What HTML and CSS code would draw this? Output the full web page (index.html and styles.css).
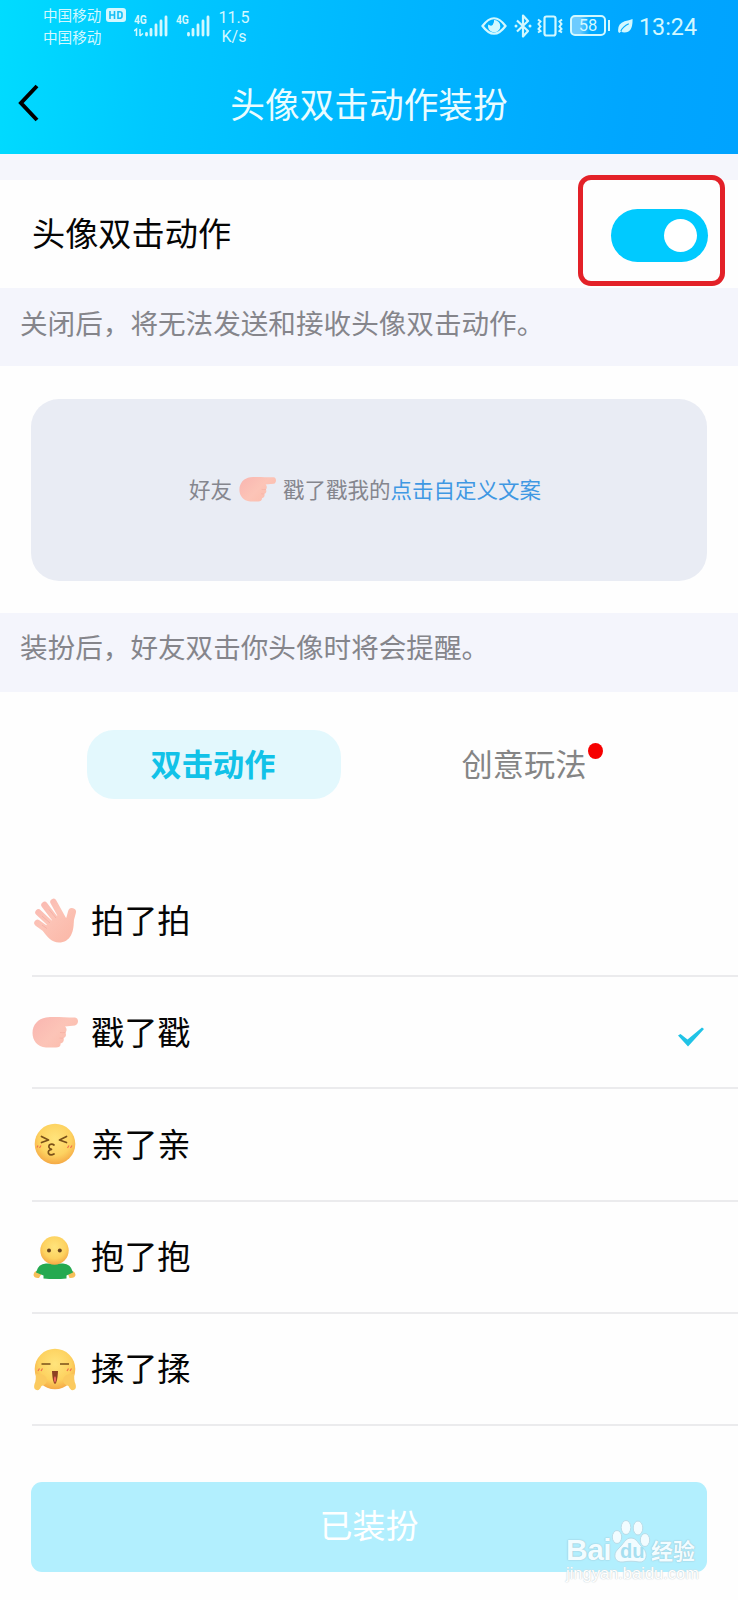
FILE: index.html
```html
<!DOCTYPE html>
<html lang="zh-CN">
<head>
<meta charset="utf-8">
<title>头像双击动作装扮</title>
<link rel="stylesheet" href="styles.css">
</head>
<body>
<svg class="defs" width="0" height="0">
  <defs>
    <radialGradient id="face" cx="50%" cy="38%" r="62%">
      <stop offset="0" stop-color="#ffe47c"/><stop offset=".65" stop-color="#fdd260"/><stop offset="1" stop-color="#f5a945"/>
    </radialGradient>
    <linearGradient id="skin" gradientUnits="userSpaceOnUse" x1="0" y1="0" x2="40" y2="40">
      <stop offset="0" stop-color="#f9b5b0"/><stop offset=".5" stop-color="#fcc4b7"/><stop offset="1" stop-color="#fbb9a9"/>
    </linearGradient>
    <symbol id="point" viewBox="0 0 46 32">
      <path d="M14 1.500C22 .5 31 1.500 43 1.500C47 2 47 8.500 43 9.500L33 10.500C35 12 35 15 33.500 16.500C34.500 19 34 21 31.500 22C32.500 25 31 27 28.500 27.500C29 30 27 31.500 24 31.500H14C5 31 .5 24 .5 17C.5 9 6 2.500 14 1.500Z" fill="url(#skin)"/>
      <path d="M28 16.500Q31 17 33.500 16.500M27.500 22Q30 22.500 31.500 22" fill="none" stroke="#f5ada1" stroke-width=".7"/>
    </symbol>
  </defs>
</svg>
<header class="header">
  <div class="status">
    <div class="carriers">
      <div class="carrier">中国移动<svg class="hd" width="20" height="14" viewBox="0 0 20 14"><rect width="20" height="14" rx="3" fill="#d2f8ff"/><path d="M4 3v8M8.500 3v8M4 7h4.500M12 3.700v6.600h1.500q2.500 0 2.500-2v-2.600q0-2-2.500-2z" fill="none" stroke="#14bdf5" stroke-width="1.600"/></svg></div>
      <div class="carrier">中国移动</div>
    </div>
    <div class="signal">
      <span class="net">4G</span>
      <svg width="34" height="22" viewBox="0 0 34 22"><path d="M0 16l2.500-2v7M6 14v7M6 21l3-2.500" fill="none" stroke="#d2f8ff" stroke-width="1.500"/><path d="M12.500 20v-1.500M17 20v-5.500M22 20v-10M27 20v-14M32 20v-18" stroke="#d2f8ff" stroke-width="2.800" stroke-linecap="round"/></svg>
    </div>
    <div class="signal">
      <span class="net">4G</span>
      <svg width="34" height="22" viewBox="0 0 34 22"><path d="M12.500 20v-1.500M17 20v-5.500M22 20v-10M27 20v-14M32 20v-18" stroke="#d2f8ff" stroke-width="2.800" stroke-linecap="round"/></svg>
    </div>
    <div class="speed"><span>11.5</span><span>K/s</span></div>
    <div class="system">
      <svg width="26" height="20" viewBox="0 0 26 20"><path d="M1.500 10Q13-5.500 24.500 10Q13 25.500 1.500 10Z" fill="none" stroke="#d2f8ff" stroke-width="2.200"/><path d="M13 4a6.200 6.200 0 1 1-5.800 4.500q2.800 2.200 4.600.2Q13.500 6.500 13 4Z" fill="#d2f8ff"/></svg>
      <svg class="bluetooth" width="18" height="24" viewBox="0 0 18 24"><path d="M3 6.500L14 17L9 22.500V1.500L14 7L3 17.500" fill="none" stroke="#d2f8ff" stroke-width="2.200" stroke-linejoin="round"/><circle cx="2" cy="12" r="1.500" fill="#d2f8ff"/><circle cx="16" cy="12" r="1.500" fill="#d2f8ff"/></svg>
      <svg class="vibrate" width="26" height="22" viewBox="0 0 26 22"><rect x="7.500" y="1.500" width="11" height="19" rx="2" fill="none" stroke="#d2f8ff" stroke-width="2.200"/><path d="M1 4.500l2.500 2-2 2.500 2 2.500-2 2.500 2 2-2.500 1.500M25 4.500l-2.500 2 2 2.500-2 2.500 2 2.500-2 2 2.500 1.500" fill="none" stroke="#d2f8ff" stroke-width="2"/></svg>
      <div class="battery"><span>58</span></div>
      <svg class="leaf" width="15" height="16" viewBox="0 0 16 16"><path d="M15.500.5Q16 15 7 15Q4.500 15 3.500 13.500L1.500 15.500L.3 14.500Q-1 6 7 3Q12 2 15.500.5Z" fill="#d2f8ff"/><path d="M3 13.500Q5 8.500 11.500 5.500" fill="none" stroke="#06aefe" stroke-width="1.200"/></svg>
      <span class="clock">13:24</span>
    </div>
  </div>
  <div class="navbar">
    <svg class="back" width="22" height="38" viewBox="0 0 22 38"><path d="M19 2L3 19L19 36" fill="none" stroke="#000" stroke-width="4"/></svg>
    <h1 class="title">头像双击动作装扮</h1>
  </div>
</header>
<main class="page">
  <section class="setting">
    <span>头像双击动作</span>
    <div class="highlight"><div class="switch"><i class="knob"></i></div></div>
  </section>
  <p class="note">关闭后，将无法发送和接收头像双击动作。</p>
  <section class="preview">
    <div class="card">
      <span>好友</span>
      <svg class="mini" width="37" height="26"><use href="#point"/></svg>
      <span>戳了戳我的<a class="link">点击自定义文案</a></span>
    </div>
  </section>
  <p class="note note-second">装扮后，好友双击你头像时将会提醒。</p>
  <nav class="tabs">
    <div class="tab tab-active">双击动作</div>
    <div class="tab"><span class="tab-label">创意玩法<i class="dot"></i></span></div>
  </nav>
  <ul class="list">
    <li class="item">
      <svg class="icon" width="46" height="46" viewBox="0 0 46 46"><g stroke="url(#skin)" stroke-width="6.500" stroke-linecap="round" fill="none"><path d="M5.500 26L18 35M6.500 15.500L22 30M12.500 8L27 27M21.500 5L32 24"/><path d="M40 15L37 26" stroke-width="8"/></g><path d="M11 31L26 18L33 21L41.500 20C43 35 38 45.500 27 45.500C20 45.500 15 40 11 34Z" fill="url(#skin)"/><path d="M10 19L18 26M17 12.500L24 21M10 28L15 31.500" stroke="#f0aaa2" stroke-width=".7" fill="none"/></svg>
      <span>拍了拍</span>
    </li>
    <li class="item">
      <svg class="icon" width="46" height="32"><use href="#point"/></svg>
      <span>戳了戳</span>
      <svg class="check" width="28" height="20" viewBox="0 0 28 20"><path d="M1 8.500L3.500 7L10.500 12.500L25 .5L27 2L11 19.500Z" fill="#20c3e6"/></svg>
    </li>
    <li class="item">
      <svg class="icon" width="46" height="46" viewBox="0 0 46 46"><circle cx="23" cy="23" r="20.300" fill="url(#face)"/><g fill="none" stroke="#795019" stroke-width="1.700" stroke-linecap="round" stroke-linejoin="round"><path d="M9.500 15.500L16.500 19L9.500 21.500M34.500 15.500L27.500 19L34.500 21.500M22 24Q20 22.300 17.500 23.800Q15.500 27 19.500 28.300Q15.500 29 16.500 32.500Q18.500 35.200 22 33"/></g><path d="M5 26.500l1-2M7.500 27l1.500-2.500M35.500 27l1.500-2.500M38.500 27l1.500-2.500" stroke="#ef704c" stroke-width="1.200"/></svg>
      <span>亲了亲</span>
    </li>
    <li class="item">
      <svg class="icon" width="46" height="46" viewBox="0 0 46 46"><path d="M5 37L10 39L7 44Q2 44.500 1.500 41Q2 37 5 37ZM39.500 37L35.500 39L37.500 44Q43 44.500 43.500 41Q43 37 39.500 37Z" fill="#f6c05a"/><path d="M14 29.500H31Q39 30 41 38.500L34.500 41.500V44.500Q23 45.500 11.500 44.500V41.500L4 38.500Q6 30 14 29.500Z" fill="#25a950"/><circle cx="22.500" cy="16.500" r="14.200" fill="url(#face)"/><circle cx="17" cy="16.500" r="2" fill="#68421c"/><circle cx="27.800" cy="16.500" r="2" fill="#68421c"/></svg>
      <span>抱了抱</span>
    </li>
    <li class="item">
      <svg class="icon" width="46" height="46" viewBox="0 0 46 46"><circle cx="23" cy="23" r="20.300" fill="url(#face)"/><path d="M9.500 18h9M28 18h9" stroke="#795019" stroke-width="1.700"/><path d="M20 25H26Q25.500 37 23 38Q20.500 37 20 25Z" fill="#8c4022"/><path d="M23 30Q25.300 33 23 37Q20.700 33 23 30Z" fill="#ee665e"/><path d="M6 25l1.500-2.500M9 25l1.500-2.500M35 25l1.500-2.500M38 25l1.500-2.500" stroke="#ef704c" stroke-width="1.200"/><path d="M3.500 27Q5.500 29 8.500 28Q15 29 15 35Q14 39 9.500 40Q7.500 45 4.500 44Q1 43 2.500 38Q4.500 34 3.500 27ZM42.500 27Q40.500 29 37.500 28Q31 29 31 35Q32 39 36.500 40Q38.500 45 41.500 44Q45 43 43.500 38Q41.500 34 42.500 27Z" fill="#fbca5f"/></svg>
      <span>揉了揉</span>
    </li>
  </ul>
  <footer class="footer">
    <button class="apply">已装扮</button>
    <div class="watermark">
      <div class="brand">
        <span class="bai">Bai</span>
        <span class="paw"><svg width="40" height="44" viewBox="0 0 40 44"><g fill="#f2fcff" stroke="#b9dce8" stroke-width="1"><ellipse cx="6" cy="17" rx="4.700" ry="6.500"/><ellipse cx="15" cy="7.500" rx="4.800" ry="7"/><ellipse cx="27" cy="8" rx="4.800" ry="7"/><ellipse cx="34" cy="20" rx="4.700" ry="6.500"/><path d="M20 18C26 18 27 24 32 28C38 34 35 43 28 42C23 41 17 41 12 42C4 43 1 35 7 29C13 24 14 18 20 18Z"/></g></svg><span class="du">du</span></span>
        <span class="jy">经验</span>
      </div>
      <div class="url">jingyan.baidu.com</div>
    </div>
  </footer>
</main>
</body>
</html>
```

FILE: styles.css
```css
* { box-sizing: border-box; }
body {
  margin: 0;
  width: 738px;
  height: 1600px;
  overflow: hidden;
  background: #fefefe;
  color: #050505;
  font-family: "Noto Sans CJK SC", sans-serif;
}
.defs { position: absolute; }
svg { display: block; flex: none; }

.header {
  height: 154px;
  background: linear-gradient(97deg, #00dcff 0%, #00c8ff 22%, #00b6ff 52%, #00a6ff 85%, #00a3ff 100%);
}
.status {
  display: flex;
  height: 56px;
  padding-left: 43px;
  color: #d2f8ff;
}
.carriers { width: 91px; padding-top: 4px; }
.carrier {
  display: flex;
  align-items: center;
  height: 22px;
  font-size: 14.6px;
  line-height: 22px;
}
.hd { margin-left: 5px; }
.signal {
  display: grid;
  width: 42px;
  height: 22px;
  margin-top: 15px;
}
.signal > * { grid-area: 1 / 1; }
.net {
  font: 700 12px/10px "Roboto", sans-serif;
  align-self: start;
  transform-origin: left;
  transform: scaleX(.85);
}
.speed {
  display: flex;
  flex-direction: column;
  align-items: center;
  width: 32px;
  padding-top: 8px;
  font: 16px/19px "Roboto", sans-serif;
}
.system {
  display: flex;
  align-items: center;
  height: 51px;
  margin-left: auto;
  padding-right: 41px;
}
.bluetooth { margin-left: 7px; }
.vibrate { margin-left: 5px; }
.battery {
  position: relative;
  width: 36px;
  height: 21px;
  margin-left: 7px;
  border: 2px solid #d2f8ff;
  border-radius: 5px;
  background: linear-gradient(90deg, #6ccbff 25%, transparent 55%);
  font: 16.5px/17px "Roboto", sans-serif;
  text-align: center;
}
.battery::after {
  content: "";
  position: absolute;
  left: 36px;
  top: 3px;
  width: 2px;
  height: 11px;
  background: #d2f8ff;
}
.leaf { margin-left: 12px; }
.clock {
  width: 58px;
  margin-left: 6px;
  padding-top: 3px;
  font: 23.3px/28px "Roboto", sans-serif;
  white-space: nowrap;
}
.navbar {
  display: grid;
  grid-template-columns: 60px 1fr 60px;
  align-items: center;
  height: 94px;
}
.back { margin-left: 18px; }
.title {
  margin: 0;
  color: #eafcff;
  font-size: 34.7px;
  font-weight: 400;
  line-height: 50px;
  text-align: center;
}

.page { border-top: 26px solid #f5f6fc; }
.setting {
  display: flex;
  align-items: center;
  justify-content: space-between;
  height: 108px;
  padding: 0 13px 4px 32px;
  font-size: 33.2px;
  line-height: 48px;
}
.highlight {
  display: flex;
  align-items: center;
  justify-content: flex-end;
  width: 147px;
  height: 111px;
  margin: -9px 0 -5px;
  padding: 10px 12px 0 0;
  border: 5px solid #e32128;
  border-radius: 13px;
}
.switch {
  display: flex;
  align-items: center;
  justify-content: flex-end;
  width: 97px;
  height: 53px;
  padding-right: 11px;
  border-radius: 27px;
  background: #00caff;
}
.knob {
  width: 33px;
  height: 33px;
  border-radius: 50%;
  background: #fff;
}
.note {
  height: 78px;
  margin: 0;
  padding: 14px 20px 0;
  background: #f4f5fc;
  color: #85858b;
  font-size: 27.6px;
  line-height: 40px;
}
.preview { padding: 33px 31px 32px; }
.card {
  display: flex;
  align-items: center;
  height: 182px;
  padding: 0 0 2px 158px;
  border-radius: 28px;
  background: #e9ecf4;
  color: #85868e;
  font-size: 21.5px;
  line-height: 32px;
}
.mini { margin: 0 7px 0 7px; }
.link { color: #3f98e3; }
.note-second { height: 79px; padding-top: 13px; }

.tabs {
  display: grid;
  grid-template-columns: 254px 254px;
  column-gap: 56px;
  height: 172px;
  padding: 38px 0 0 87px;
}
.tab {
  height: 69px;
  border-radius: 27px;
  color: #858585;
  font-size: 31.2px;
  line-height: 66px;
  text-align: center;
}
.tab-active {
  padding-right: 2px;
  background: #e3f8fd;
  color: #11c2e8;
  font-weight: 700;
}
.tab-label { position: relative; }
.dot {
  position: absolute;
  right: -17px;
  top: 3px;
  width: 15px;
  height: 16px;
  border-radius: 50%;
  background: #f60000;
}

.list {
  margin: 0;
  padding: 1px 0 0 32px;
  list-style: none;
}
.item {
  display: flex;
  align-items: center;
  height: 112.2px;
  border-bottom: 2px solid #ebebed;
  font-size: 33.2px;
  line-height: 48px;
}
.item > span { margin-bottom: 3px; }
.icon { margin-right: 13px; }
.check { margin: 10px 33px 0 auto; }

.footer {
  position: relative;
  padding: 56px 31px 0 31px;
}
.apply {
  display: block;
  width: 100%;
  height: 90px;
  padding: 0 0 5px;
  border: 0;
  border-radius: 11px;
  background: #b2effe;
  color: #fff;
  font: 33px/84px "Noto Sans CJK SC", sans-serif;
}
.watermark {
  position: absolute;
  left: 566px;
  top: 94px;
  color: #f2fcff;
}
.brand { display: flex; align-items: flex-end; height: 44px; }
.bai, .jy { text-shadow: 0 0 1px #8fc1d2, 0 0 2px #a7cfdb; }
.bai { width: 45px; font: 700 30px/28px "Liberation Sans", sans-serif; letter-spacing: -.5px; }
.paw { position: relative; width: 40px; }
.du {
  position: absolute;
  left: 9px;
  bottom: 3px;
  color: #a6dff0;
  font: 700 20px/20px "Liberation Sans", sans-serif;
}
.jy { font-size: 22px; font-weight: 700; line-height: 30px; }
.url {
  color: #fff;
  font: 16.5px/18px "Liberation Sans", sans-serif;
  text-shadow: 0 0 1px #bcc9cd, 0 0 2px #dce4e6;
}
```
